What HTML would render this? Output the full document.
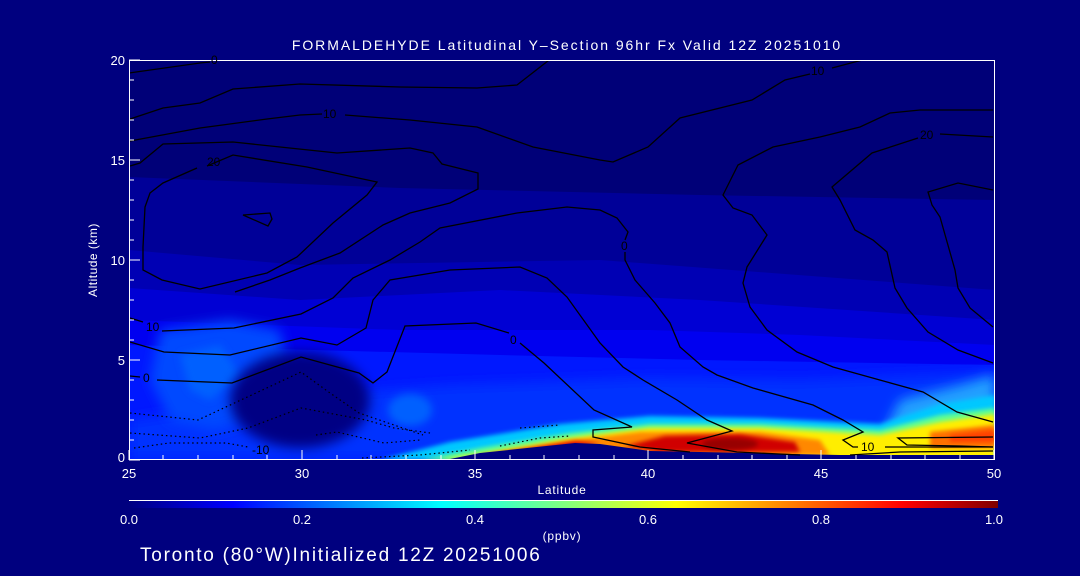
<!DOCTYPE html>
<html><head><meta charset="utf-8"><style>
html,body{margin:0;padding:0;background:#00007f;width:1080px;height:576px;overflow:hidden}
svg{display:block}
text{font-family:"Liberation Sans",sans-serif;fill:#fff}
.k{fill:#000}
</style></head><body>
<svg width="1080" height="576" viewBox="0 0 1080 576" xmlns="http://www.w3.org/2000/svg">
<defs>
<clipPath id="pc"><rect x="129" y="60" width="866" height="400"/></clipPath>
<filter id="b6" x="-50%" y="-50%" width="200%" height="200%"><feGaussianBlur stdDeviation="6"/></filter>
<filter id="b4" x="-50%" y="-50%" width="200%" height="200%"><feGaussianBlur stdDeviation="4"/></filter>
<filter id="b2" x="-50%" y="-50%" width="200%" height="200%"><feGaussianBlur stdDeviation="2"/></filter>
<linearGradient id="cb" x1="0" x2="1" y1="0" y2="0">
<stop offset="0" stop-color="#000080"/><stop offset="0.12" stop-color="#0000ff"/>
<stop offset="0.36" stop-color="#00ffff"/><stop offset="0.5" stop-color="#80ff80"/>
<stop offset="0.63" stop-color="#ffff00"/><stop offset="0.89" stop-color="#ff0000"/>
<stop offset="1" stop-color="#800000"/></linearGradient>
</defs>
<rect width="1080" height="576" fill="#00007f"/>
<g clip-path="url(#pc)">
<rect x="129" y="60" width="866" height="400" fill="#000078"/>
<polygon points="129,177 400,188 700,195 995,200 995,460 129,460" fill="#000098"/>
<polygon points="129,250 300,265 600,260 995,290 995,460 129,460" fill="#0000b4"/>
<polygon points="129,288 300,300 500,290 700,300 995,320 995,460 129,460" fill="#0000d4"/>
<polygon points="129,320 400,330 650,330 800,335 995,345 995,460 129,460" fill="#0000f0"/>
<polygon points="129,345 500,355 700,360 995,365 995,460 129,460" fill="#0018ff"/>
<polygon points="129,420 300,395 450,385 650,378 800,380 995,372 995,460 129,460" fill="#0030ff" filter="url(#b6)"/>
<polygon points="160,330 230,320 280,330 290,380 250,420 215,430 170,420 150,380" fill="#0048ff" filter="url(#b6)"/>
<polygon points="180,355 220,345 240,375 210,400 190,390" fill="#0060ff" filter="url(#b4)"/>
<ellipse cx="410" cy="410" rx="22" ry="16" fill="#0060ff" filter="url(#b4)"/>
<ellipse cx="300" cy="400" rx="70" ry="48" fill="#000084" filter="url(#b6)"/>
<polygon points="900,400 960,385 995,375 995,440 880,440" fill="#20a0ff" filter="url(#b6)"/>
<polygon points="380,460 450,442 560,424 650,416 760,418 880,424 940,404 995,395 995,460" fill="#00c8ff" filter="url(#b2)"/>
<polygon points="420,460 480,448 570,433 650,424 760,424 880,430 940,415 995,408 995,460" fill="#60ff90" filter="url(#b2)"/>
<polygon points="440,460 490,452 570,438 650,428 760,428 880,435 940,422 995,414 995,460" fill="#ffee00" filter="url(#b2)"/>
<polygon points="470,460 500,453 575,440 640,432 760,432 820,440 830,455 600,456" fill="#ff8800" filter="url(#b2)"/>
<polygon points="930,432 995,425 995,448 930,448" fill="#ff7000" filter="url(#b2)"/>
<polygon points="950,435 995,430 995,442 950,442" fill="#ff4000" filter="url(#b2)"/>
<polygon points="480,456 575,441 600,443 560,450 490,458" fill="#e00000" filter="url(#b2)"/>
<polygon points="625,446 665,436 740,434 795,442 800,452 660,452" fill="#d00000" filter="url(#b2)"/>
<ellipse cx="730" cy="444" rx="28" ry="6" fill="#980000" filter="url(#b2)"/>
<polygon points="440,461 480,453 575,443 600,444 650,451 700,452 840,455 995,455 995,461" fill="#000080"/>
</g>
<g fill="none" stroke="#000" stroke-width="1.3" clip-path="url(#pc)">
<path d="M129,73 L200,63 L210,62 M222,60 L240,58"/>
<path d="M130,119 L163,108 L200,103 L233,89 L300,84 L400,87 L477,88 L517,85 L553,57"/>
<path d="M130,141 L200,128 L267,119 L300,115 L322,114 M345,115 L410,120 L477,127 L533,147 L600,160 L613,162 L648,147 L680,118 L752,100 L785,80 L810,74 M832,68 L870,58"/>
<path d="M130,166 L140,163 L163,144 L233,142 L337,153 L410,148 L433,153 L442,164 L478,173 L478,189 L450,203 L410,213 L383,225 L340,253 L300,268 L270,280 L235,292"/>
<path d="M207,166 L233,155 L307,167 L377,182 L367,195 L333,223 L297,257 L267,273 L200,289 L162,280 L143,270 L143,247 L145,207 L150,193 L163,183 L197,168"/>
<path d="M243,215 L270,213 L272,219 L268,226 Z"/>
<path d="M130,318 L143,322 M162,331 L234,328 L301,314 L333,298 L353,278 L390,260 L420,242 L440,228 L517,213 L567,207 L600,210 L617,218 L628,232 L625,240 M625,252 L625,260 L635,280 L655,303 L670,323 L680,347 L703,367 L717,375 L753,388 L813,405 L843,420 L863,432 L843,440 L853,447 L858,447 M885,447 L993,447"/>
<path d="M130,342 L164,352 L230,355 L301,338 L337,345 L366,328 L373,300 L390,280 L450,270 L520,267 L547,278 L567,297 L600,343 L623,367 L643,380 L677,400 L707,420 L732,431 L687,443 L737,452 L800,455"/>
<path d="M130,376 L140,377 M157,380 L232,383 L301,357 L359,373 L373,383 L387,372 L405,326 L476,323 L509,333 M520,343 L544,363 L594,410 L632,427 L593,430 L593,437 L640,447 L690,452"/>
<path d="M993,110 L920,110 L890,113 L860,127 L820,137 L773,147 L738,165 L723,195 L733,208 L752,215 L767,235 L747,267 L743,283 L750,307 L767,330 L797,352 L833,367 L923,392 L957,412 L993,422"/>
<path d="M993,137 L940,134 M918,138 L872,153 L832,187 L840,200 L855,230 L873,240 L887,252 L895,288 L907,308 L928,332 L958,350 L993,363"/>
<path d="M993,190 L958,183 L928,192 L932,205 L940,217 L955,270 L958,288 L970,308 L993,327"/>
<path d="M993,437 L898,438 L907,445 L960,446 L993,447"/>
<path d="M850,455 L900,452 L993,451"/>
</g>
<g fill="none" stroke="#000" stroke-width="1.2" stroke-dasharray="1.5,3" clip-path="url(#pc)">
<path d="M130,413 L198,420 L301,372 L330,393 L359,413 L423,435"/>
<path d="M130,433 L200,438 L248,428 L301,408 L366,420 L394,428 L430,433"/>
<path d="M134,448 L169,443 L226,443 L248,447"/>
<path d="M316,435 L337,432 L384,443 L420,440"/>
<path d="M362,458 L420,455 L470,450 M500,446 L540,438 L570,436"/>
<path d="M520,428 L560,425"/>
</g>
<rect x="129.5" y="60.5" width="865" height="399" fill="none" stroke="#fff" stroke-width="1"/>
<g stroke="#fff" stroke-width="1">
<path d="M129,460V450M302,460V450M475,460V450M648,460V450M821,460V450M994,460V450"/>
<path d="M163,460V455M198,460V455M233,460V455M267,460V455M337,460V455M371,460V455M406,460V455M441,460V455M510,460V455M544,460V455M579,460V455M614,460V455M683,460V455M718,460V455M752,460V455M787,460V455M856,460V455M891,460V455M925,460V455M960,460V455"/>
<path d="M129,60H140M129,160H140M129,260H140M129,360H140M129,460H140M129,80H134M129,100H134M129,120H134M129,140H134M129,180H134M129,200H134M129,220H134M129,240H134M129,280H134M129,300H134M129,320H134M129,340H134M129,380H134M129,400H134M129,420H134M129,440H134"/>
</g>
<g font-size="12">
<text class="k" x="146" y="331">10</text><text class="k" x="143" y="382">0</text>
<text class="k" x="252" y="454">-10</text><text class="k" x="323" y="118">10</text>
<text class="k" x="207" y="166">20</text><text class="k" x="510" y="344">0</text>
<text class="k" x="621" y="250">0</text><text class="k" x="811" y="75">10</text>
<text class="k" x="920" y="139">20</text><text class="k" x="861" y="451">10</text>
<text class="k" x="211" y="64">0</text>
</g>
<text x="567" y="50" font-size="14" text-anchor="middle" letter-spacing="1.95">FORMALDEHYDE Latitudinal Y–Section 96hr  Fx Valid 12Z 20251010</text>
<g font-size="13" text-anchor="end"><text x="125" y="65">20</text><text x="125" y="165">15</text><text x="125" y="265">10</text><text x="125" y="365">5</text><text x="125" y="462">0</text></g>
<text x="97" y="260" font-size="12" text-anchor="middle" transform="rotate(-90 97 260)" letter-spacing="0.5">Altitude (km)</text>
<g font-size="13" text-anchor="middle"><text x="129" y="478">25</text><text x="302" y="478">30</text><text x="475" y="478">35</text><text x="648" y="478">40</text><text x="821" y="478">45</text><text x="994" y="478">50</text></g>
<text x="562" y="494" font-size="12" text-anchor="middle" letter-spacing="0.8">Latitude</text>
<line x1="129" y1="500.5" x2="998" y2="500.5" stroke="#fff"/>
<rect x="129" y="501" width="869" height="7" fill="url(#cb)"/>
<g font-size="13" text-anchor="middle"><text x="129" y="524">0.0</text><text x="302" y="524">0.2</text><text x="475" y="524">0.4</text><text x="648" y="524">0.6</text><text x="821" y="524">0.8</text><text x="994" y="524">1.0</text></g>
<text x="562" y="540" font-size="12" text-anchor="middle" letter-spacing="0.8">(ppbv)</text>
<text x="140" y="561" font-size="19" letter-spacing="1.75">Toronto (80°W)Initialized 12Z 20251006</text>
</svg>
</body></html>
